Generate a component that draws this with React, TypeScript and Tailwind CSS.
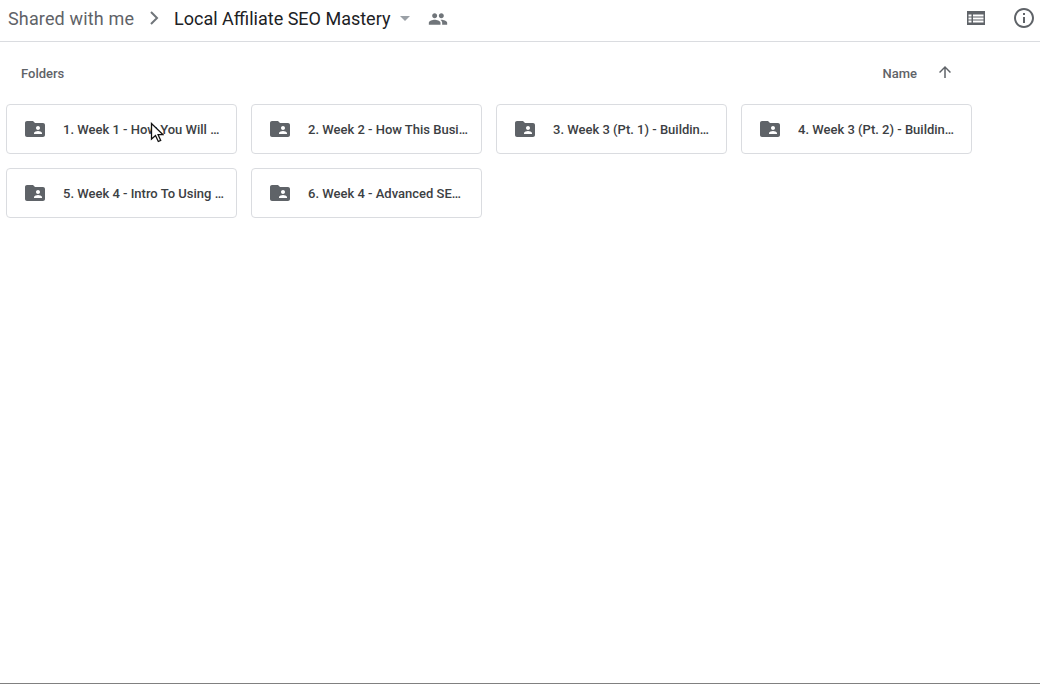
import React from "react";

const folders = [
  "1. Week 1 - How You Will …",
  "2. Week 2 - How This Busi…",
  "3. Week 3 (Pt. 1) - Buildin…",
  "4. Week 3 (Pt. 2) - Buildin…",
  "5. Week 4 - Intro To Using …",
  "6. Week 4 - Advanced SE…",
];

function SharedFolderIcon() {
  return (
    <svg width="24" height="24" viewBox="0 0 24 24" fill="#5f6368" className="shrink-0">
      <path d="M20 6h-8l-2-2H4c-1.1 0-1.99.9-1.99 2L2 18c0 1.1.9 2 2 2h16c1.1 0 2-.9 2-2V8c0-1.1-.9-2-2-2zm-5 3c1.1 0 2 .9 2 2s-.9 2-2 2-2-.9-2-2 .9-2 2-2zm4 8h-8v-1c0-1.33 2.67-2 4-2s4 .67 4 2v1z" />
    </svg>
  );
}

function Header() {
  return (
    <header className="flex h-[42px] shrink-0 items-center border-b border-[#dadce0] pb-[5px] pl-2 pr-[4px]">
      <span className="text-[18px] tracking-[0.15px] text-[#5f6368]">Shared with me</span>
      <svg width="24" height="24" viewBox="0 0 24 24" fill="none" stroke="#70757a" strokeWidth="2" className="ml-[8px]">
        <path d="M9 6l6 6-6 6" />
      </svg>
      <span className="ml-[8px] text-[18px] text-[#202124]">Local Affiliate SEO Mastery</span>
      <svg width="10" height="5" viewBox="0 0 10 5" fill="#9aa0a6" className="ml-[10px]">
        <path d="M0 0h10L5 5z" />
      </svg>
      <svg width="20" height="20" viewBox="0 0 24 24" fill="#70757a" className="ml-[18px] mt-[2px]">
        <path d="M16 11c1.66 0 2.99-1.34 2.99-3S17.66 5 16 5c-1.66 0-3 1.34-3 3s1.34 3 3 3zm-8 0c1.66 0 2.99-1.34 2.99-3S9.66 5 8 5C6.34 5 5 6.34 5 8s1.34 3 3 3zm0 2c-2.33 0-7 1.17-7 3.5V19h14v-2.5c0-2.33-4.67-3.5-7-3.5zm8 0c-.29 0-.62.02-.97.05 1.16.84 1.97 1.97 1.97 3.45V19h6v-2.5c0-2.33-4.67-3.5-7-3.5z" />
      </svg>
      <div className="ml-auto flex items-center gap-[27px]">
        <svg width="18" height="14" viewBox="0 0 18 14" fill="#5f6368">
          <path d="M0 0h18v14H0zM1.500 3.500v2h3v-2zm4.500 0v2h10.500v-2zM1.500 6.500v2h3v-2zm4.500 0v2h10.500v-2zM1.500 9.500v2h3v-2zm4.500 0v2h10.500v-2z" fillRule="evenodd" />
        </svg>
        <svg width="24" height="24" viewBox="0 0 24 24" fill="#5f6368">
          <path d="M11 7h2v2h-2zm0 4h2v6h-2zm1-9C6.480 2 2 6.480 2 12s4.480 10 10 10 10-4.480 10-10S17.520 2 12 2zm0 18c-4.410 0-8-3.590-8-8s3.590-8 8-8 8 3.590 8 8-3.590 8-8 8z" />
        </svg>
      </div>
    </header>
  );
}

export default function App() {
  return (
    <div className="relative flex h-[684px] flex-col overflow-hidden border-b border-[#808080] bg-white font-['Roboto',sans-serif]">
      <Header />

      <div className="flex h-[62px] shrink-0 items-center pl-[21px] pr-[86px] pt-[2px] text-[13px] font-medium text-[#5f6368]">
        <span>Folders</span>
        <span className="ml-auto">Name</span>
        <svg width="18" height="18" viewBox="0 0 24 24" fill="#5f6368" className="mb-[5px] ml-[19px]">
          <path d="M4 12l1.410 1.410L11 7.830V20h2V7.830l5.580 5.590L20 12l-8-8-8 8z" />
        </svg>
      </div>

      <div className="grid grid-cols-[repeat(4,231px)] gap-[14px] pl-[6px]">
        {folders.map((name) => (
          <div key={name} className="flex h-[50px] items-center rounded-[4px] border border-[#dadce0] pl-[16px] pr-[12px]">
            <SharedFolderIcon />
            <span className="ml-[16px] truncate pt-[2px] text-[13px] font-medium text-[#3c4043]">{name}</span>
          </div>
        ))}
      </div>

      {/* mouse pointer caught in the capture */}
      <svg width="14" height="21" viewBox="0 0 14 21" className="absolute left-[150px] top-[122px]">
        <path d="M1.500 1.500v15.500l4-3.500 2.800 6 2.400-1.100-2.600-5.700h5z" fill="#fff" stroke="#111" strokeWidth="1.300" />
      </svg>
    </div>
  );
}
